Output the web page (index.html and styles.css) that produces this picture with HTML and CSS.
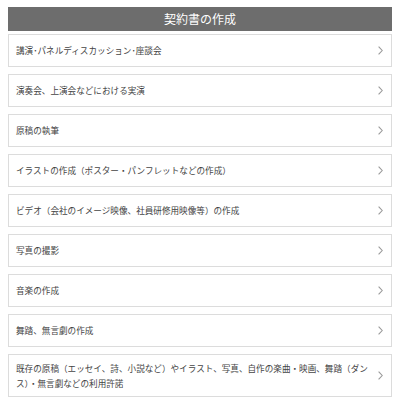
FILE: index.html
```html
<!DOCTYPE html>
<html lang="ja">
<head>
<meta charset="utf-8">
<link rel="stylesheet" href="styles.css">
</head>
<body>
<div class="wrap">
  <h1 class="title">契約書の作成</h1>
  <ul class="list">
    <li class="item"><span class="label">講演･パネルディスカッション･座談会</span><svg class="chev" viewBox="0 0 5 9" width="5" height="9"><polyline points="0.6,0.6 4.2,4.5 0.6,8.4"/></svg></li>
    <li class="item"><span class="label">演奏会、上演会などにおける実演</span><svg class="chev" viewBox="0 0 5 9" width="5" height="9"><polyline points="0.6,0.6 4.2,4.5 0.6,8.4"/></svg></li>
    <li class="item"><span class="label">原稿の執筆</span><svg class="chev" viewBox="0 0 5 9" width="5" height="9"><polyline points="0.6,0.6 4.2,4.5 0.6,8.4"/></svg></li>
    <li class="item"><span class="label">イラストの作成（ポスター・パンフレットなどの作成）</span><svg class="chev" viewBox="0 0 5 9" width="5" height="9"><polyline points="0.6,0.6 4.2,4.5 0.6,8.4"/></svg></li>
    <li class="item"><span class="label">ビデオ（会社のイメージ映像、社員研修用映像等）の作成</span><svg class="chev" viewBox="0 0 5 9" width="5" height="9"><polyline points="0.6,0.6 4.2,4.5 0.6,8.4"/></svg></li>
    <li class="item"><span class="label">写真の撮影</span><svg class="chev" viewBox="0 0 5 9" width="5" height="9"><polyline points="0.6,0.6 4.2,4.5 0.6,8.4"/></svg></li>
    <li class="item"><span class="label">音楽の作成</span><svg class="chev" viewBox="0 0 5 9" width="5" height="9"><polyline points="0.6,0.6 4.2,4.5 0.6,8.4"/></svg></li>
    <li class="item"><span class="label">舞踏、無言劇の作成</span><svg class="chev" viewBox="0 0 5 9" width="5" height="9"><polyline points="0.6,0.6 4.2,4.5 0.6,8.4"/></svg></li>
    <li class="item"><span class="label">既存の原稿（エッセイ、詩、小説など）やイラスト、写真、自作の楽曲・映画、舞踏（ダンス）・無言劇などの利用許諾</span><svg class="chev" viewBox="0 0 5 9" width="5" height="9"><polyline points="0.6,0.6 4.2,4.5 0.6,8.4"/></svg></li>
  </ul>
</div>
</body>
</html>
```

FILE: styles.css
```css
html, body {
  margin: 0;
  padding: 0;
  background: #ffffff;
}
body {
  font-family: "Noto Sans CJK JP", "Noto Sans", sans-serif;
}
.wrap {
  padding: 7px 8px 0 8px;
}
.title {
  margin: 0;
  height: 24px;
  background: #6d6d6d;
  color: #ffffff;
  font-size: 12px;
  font-weight: normal;
  line-height: 24px;
  text-align: center;
}
.list {
  list-style: none;
  margin: 3px 0 0 0;
  padding: 0;
  display: flex;
  flex-direction: column;
  gap: 7px;
}
.item {
  display: flex;
  align-items: center;
  box-sizing: border-box;
  min-height: 33px;
  padding: 6px 8px 6px 7px;
  border: 1px solid #dcdcdc;
  background: #ffffff;
  color: #444444;
  font-size: 8.6px;
  line-height: 14.5px;
}
.label {
  flex: 1;
  padding-right: 8px;
}
.chev {
  flex: none;
  fill: none;
  stroke: #9a9a9a;
  stroke-width: 1.1;
}
```
